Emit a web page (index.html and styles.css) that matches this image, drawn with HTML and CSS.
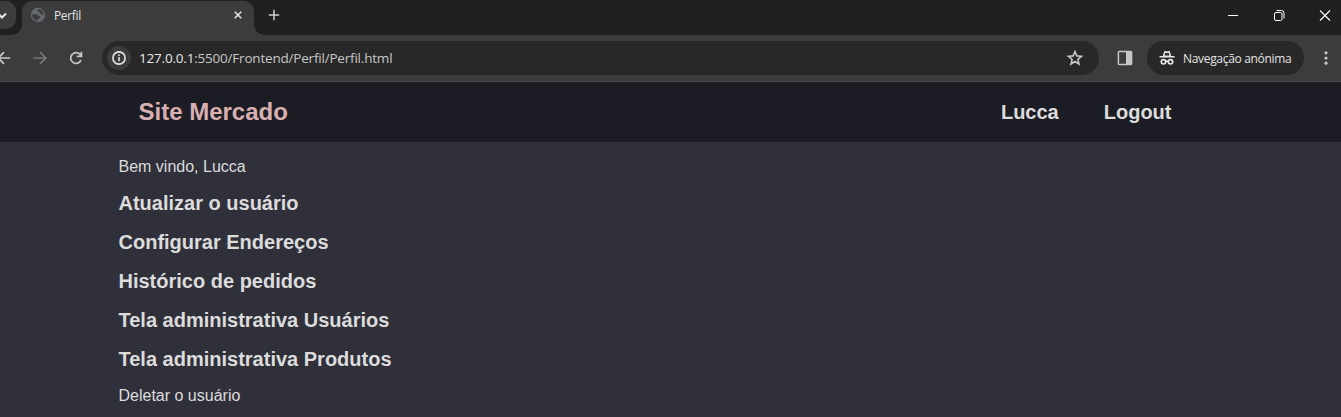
FILE: index.html
```html
<!DOCTYPE html>
<html lang="pt">
<head>
<meta charset="utf-8">
<title>Perfil</title>
<link rel="stylesheet" href="styles.css">
</head>
<body>
<div class="tab-strip">
  <div class="tab-search"><svg width="16" height="28" viewBox="0 0 16 28"><path d="M-2 12.500 2 16.500 6 12.500" fill="none" stroke="#e6e6e6" stroke-width="2"/></svg></div>
  <div class="tab">
    <svg class="globe" width="16" height="16" viewBox="0 0 16 16"><circle cx="8" cy="8" r="7.200" fill="#65696f"/><path d="M2.200 7.200H5.800C7.800 7.200 8.200 8.200 8.200 9.300H10V11.300H7.800V13.600C4.300 13.600 1.900 10.800 2.200 7.200ZM8.300 2.300C7 3 7.200 4.600 8.300 4.700H9.500V6.500H11.300V7.800H13.700C13.700 4.700 11.300 2.300 8.300 2.300Z" fill="#3c3c3c"/></svg>
    <span class="tab-title">Perfil</span>
    <svg class="tab-close" width="16" height="16" viewBox="0 0 16 16"><path d="m4.700 4.700 6.600 6.600m0-6.600-6.600 6.600" stroke="#e3e3e3" stroke-width="1.500"/></svg>
  </div>
  <svg class="new-tab" width="12" height="12" viewBox="0 0 12 12"><path d="M6 .8v10.400M.8 6h10.400" stroke="#d0d0d0" stroke-width="1.500"/></svg>
  <div class="window-controls">
    <svg width="12" height="12" viewBox="0 0 12 12"><path d="M1 5.500h10" stroke="#fff"/></svg>
    <svg width="12" height="12" viewBox="0 0 12 12" fill="none" stroke="#fff"><rect x="1.500" y="2.500" width="7.500" height="8" rx="1.500"/><path d="M3.500 .5h5a2.500 2.500 0 0 1 2.500 2.500v5.500"/></svg>
    <svg width="12" height="12" viewBox="0 0 12 12"><path d="m1 .5 10 10m0-10-10 10" stroke="#fff" stroke-width="1.100"/></svg>
  </div>
</div>
<div class="toolbar">
  <div class="nav-buttons">
    <svg width="16" height="16" viewBox="0 0 16 16" fill="none" stroke="#c7c7c7" stroke-width="1.700"><path d="M14.200 8H3M8 2.200 2.200 8 8 13.800"/></svg>
    <svg width="16" height="16" viewBox="0 0 16 16" fill="none" stroke="#777" stroke-width="1.700"><path d="M1.800 8H13M8 2.200 13.800 8 8 13.800"/></svg>
    <svg width="16" height="16" viewBox="0 0 16 16" fill="none" stroke="#c7c7c7" stroke-width="1.700"><path d="M13 10.200A5.400 5.400 0 1 1 12 4.300L13.200 5.600M13.400 1.800v4.600H8.800"/></svg>
  </div>
  <div class="address">
    <span class="info"><svg width="16" height="16" viewBox="0 0 16 16"><circle cx="8" cy="8" r="6.100" fill="none" stroke="#e6e6e6" stroke-width="1.600"/><path d="M8 7v4.300M8 4.500v1.500" stroke="#e6e6e6" stroke-width="1.500"/></svg></span>
    <span class="url"><span class="host">127.0.0.1</span>:5500/Frontend/Perfil/Perfil.html</span>
    <svg class="star" width="18" height="18" viewBox="0 0 18 18"><path d="m9 2.500 1.800 4.400 4.700.4-3.600 3.100 1.100 4.600-4-2.500L5 15l1.100-4.600-3.600-3.100 4.700-.4Z" fill="none" stroke="#c7c7c7" stroke-width="1.600"/></svg>
  </div>
  <svg class="side-panel" width="16" height="16" viewBox="0 0 16 16"><rect x="1.400" y="1.400" width="13.200" height="13.200" rx="1" fill="none" stroke="#c7c7c7" stroke-width="1.500"/><path d="M9 1h5.500v14H9Z" fill="#c7c7c7"/></svg>
  <div class="incognito">
    <svg width="16" height="16" viewBox="0 0 16 16"><path d="M5.500 .8 8 1.600l2.500-.8L12.300 6H15.500v1.600H.5V6h3.200Z" fill="#e6e6e6"/><path d="M6.300 2.700 5.500 5.500h5l-.8-2.800L8 3.200Z" fill="#282828"/><g fill="none" stroke="#e6e6e6" stroke-width="1.700"><circle cx="4.500" cy="11.800" r="2.200"/><circle cx="11.500" cy="11.800" r="2.200"/><path d="M6.700 11.500q1.300-.8 2.600 0"/></g></svg>
    <span>Navegação anónima</span>
  </div>
  <svg class="menu" width="4" height="16" viewBox="0 0 4 16" fill="#c7c7c7"><circle cx="2" cy="2.800" r="1.600"/><circle cx="2" cy="8" r="1.600"/><circle cx="2" cy="13.200" r="1.600"/></svg>
</div>
<header class="site-header">
  <h1 class="brand">Site Mercado</h1>
  <nav class="site-nav"><a>Lucca</a><a>Logout</a></nav>
</header>
<main class="profile">
  <p>Bem vindo, Lucca</p>
  <h2>Atualizar o usuário</h2>
  <h2>Configurar Endereços</h2>
  <h2>Histórico de pedidos</h2>
  <h2>Tela administrativa Usuários</h2>
  <h2>Tela administrativa Produtos</h2>
  <p>Deletar o usuário</p>
</main>
</body>
</html>
```
FILE: styles.css
```css
* { box-sizing: border-box; }
body { margin: 0; height: 417px; overflow: hidden; background: #30303a; color: #dcdcdc; font-family: "Liberation Sans", Arial, sans-serif; }
svg { display: block; flex: none; }
h1, h2, p { margin: 0; }
.tab-strip { display: flex; align-items: center; height: 35px; background: #202020; font-family: "Open Sans", "Noto Sans", sans-serif; }
.tab-search { width: 16px; height: 28px; margin-bottom: 5px; background: #3c3c3c; border-radius: 0 10px 10px 0; }
.tab { position: relative; display: flex; align-items: center; width: 232px; height: 34px; margin: 1px 0 0 6px; padding: 0 8px 6px; background: #3c3c3c; border-radius: 10px 10px 0 0; }
.tab::before, .tab::after { content: ""; position: absolute; bottom: 0; width: 10px; height: 10px; }
.tab::before { left: -10px; background: radial-gradient(circle at 0 0, transparent 9.5px, #3c3c3c 10px); }
.tab::after { right: -10px; background: radial-gradient(circle at 100% 0, transparent 9.5px, #3c3c3c 10px); }
.tab-title { flex: 1; margin-left: 8px; padding-top: 2px; font-size: 12px; line-height: 16px; letter-spacing: -0.35px; color: #e3e3e3; }
.new-tab { margin: 0 0 5px 14px; }
.window-controls { display: flex; gap: 34px; margin: 0 10px 4px auto; }
.toolbar { display: flex; align-items: center; height: 47px; background: #3c3c3c; border-bottom: 1px solid #4b4b4e; font-family: "Open Sans", "Noto Sans", sans-serif; }
.nav-buttons { display: flex; gap: 20px; margin-left: -4px; }
.address { display: flex; align-items: center; width: 997px; height: 34px; margin-left: 18px; padding: 0 15px 0 5px; background: #282828; border-radius: 17px; }
.info { display: flex; align-items: center; justify-content: center; width: 24px; height: 24px; border-radius: 12px; background: #3c3c3c; }
.url { flex: 1; margin-left: 8px; font-size: 13.5px; letter-spacing: -0.2px; color: #c7c7c7; }
.host { color: #e8e8e8; }
.side-panel { margin-left: 18px; }
.incognito { display: flex; align-items: center; gap: 8px; width: 157px; height: 34px; margin-left: 14px; padding-left: 12px; background: #282828; border-radius: 17px; font-size: 12px; letter-spacing: -0.32px; color: #e3e3e3; white-space: nowrap; }
.menu { margin-left: 20px; }
.site-header { display: flex; align-items: center; justify-content: space-between; height: 60px; padding: 0 169.5px 0 138.5px; background: #1c1c24; }
.brand { font-size: 24px; line-height: 28px; color: #d9b0b0; }
.site-nav { display: flex; gap: 45px; font-size: 20px; font-weight: bold; line-height: 24px; }
.profile { padding: 15px 118.5px 0; }
.profile p { font-size: 16px; line-height: 20px; }
.profile h2 { margin: 15px 0; font-size: 20px; line-height: 24px; }
.profile p + h2 { margin-top: 14px; }
```
